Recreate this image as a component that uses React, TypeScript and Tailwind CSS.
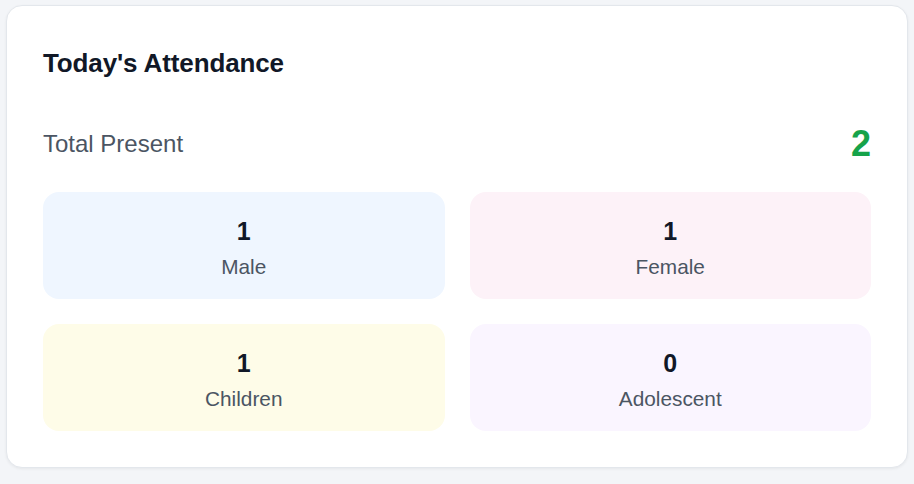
import React from "react";

const boxes = [
  { n: 1, label: "Male", bg: "bg-[#eff6ff]" },
  { n: 1, label: "Female", bg: "bg-[#fdf2f8]" },
  { n: 1, label: "Children", bg: "bg-[#fefce8]" },
  { n: 0, label: "Adolescent", bg: "bg-[#faf5ff]" },
];

export default function App() {
  return (
    <div
      className="min-h-[484px] w-[914px] bg-[#f3f5f8] px-[6px] pt-[5px]"
      style={{ fontFamily: '"Liberation Sans", Arial, sans-serif' }}
    >
      <div className="w-[902px] rounded-[16px] border border-[#e3e7ec] bg-white px-[36px] pt-[41px] pb-[36px] shadow-[0_1px_3px_rgba(0,0,0,0.06)]">
        <h2 className="text-[26px] font-bold leading-[32px] text-[#111827] tracking-[-0.12px]">
          Today's Attendance
        </h2>
        <div className="mt-[45px] flex h-[40px] items-center justify-between">
          <span className="text-[24px] leading-[32px] text-[#4b5563]">Total Present</span>
          <span className="text-[36px] font-bold leading-[40px] text-[#16a34a]">2</span>
        </div>
        <div className="mt-[28px] grid grid-cols-2 gap-[25px]">
          {boxes.map((b) => (
            <div
              key={b.label}
              className={`${b.bg} flex h-[107px] flex-col items-center rounded-[16px] pt-[23px]`}
            >
              <div className="text-[25px] font-bold leading-[32px] text-[#111827]">{b.n}</div>
              <div className="mt-[6px] text-[20.8px] leading-[28px] text-[#4b5563]">{b.label}</div>
            </div>
          ))}
        </div>
      </div>
    </div>
  );
}
